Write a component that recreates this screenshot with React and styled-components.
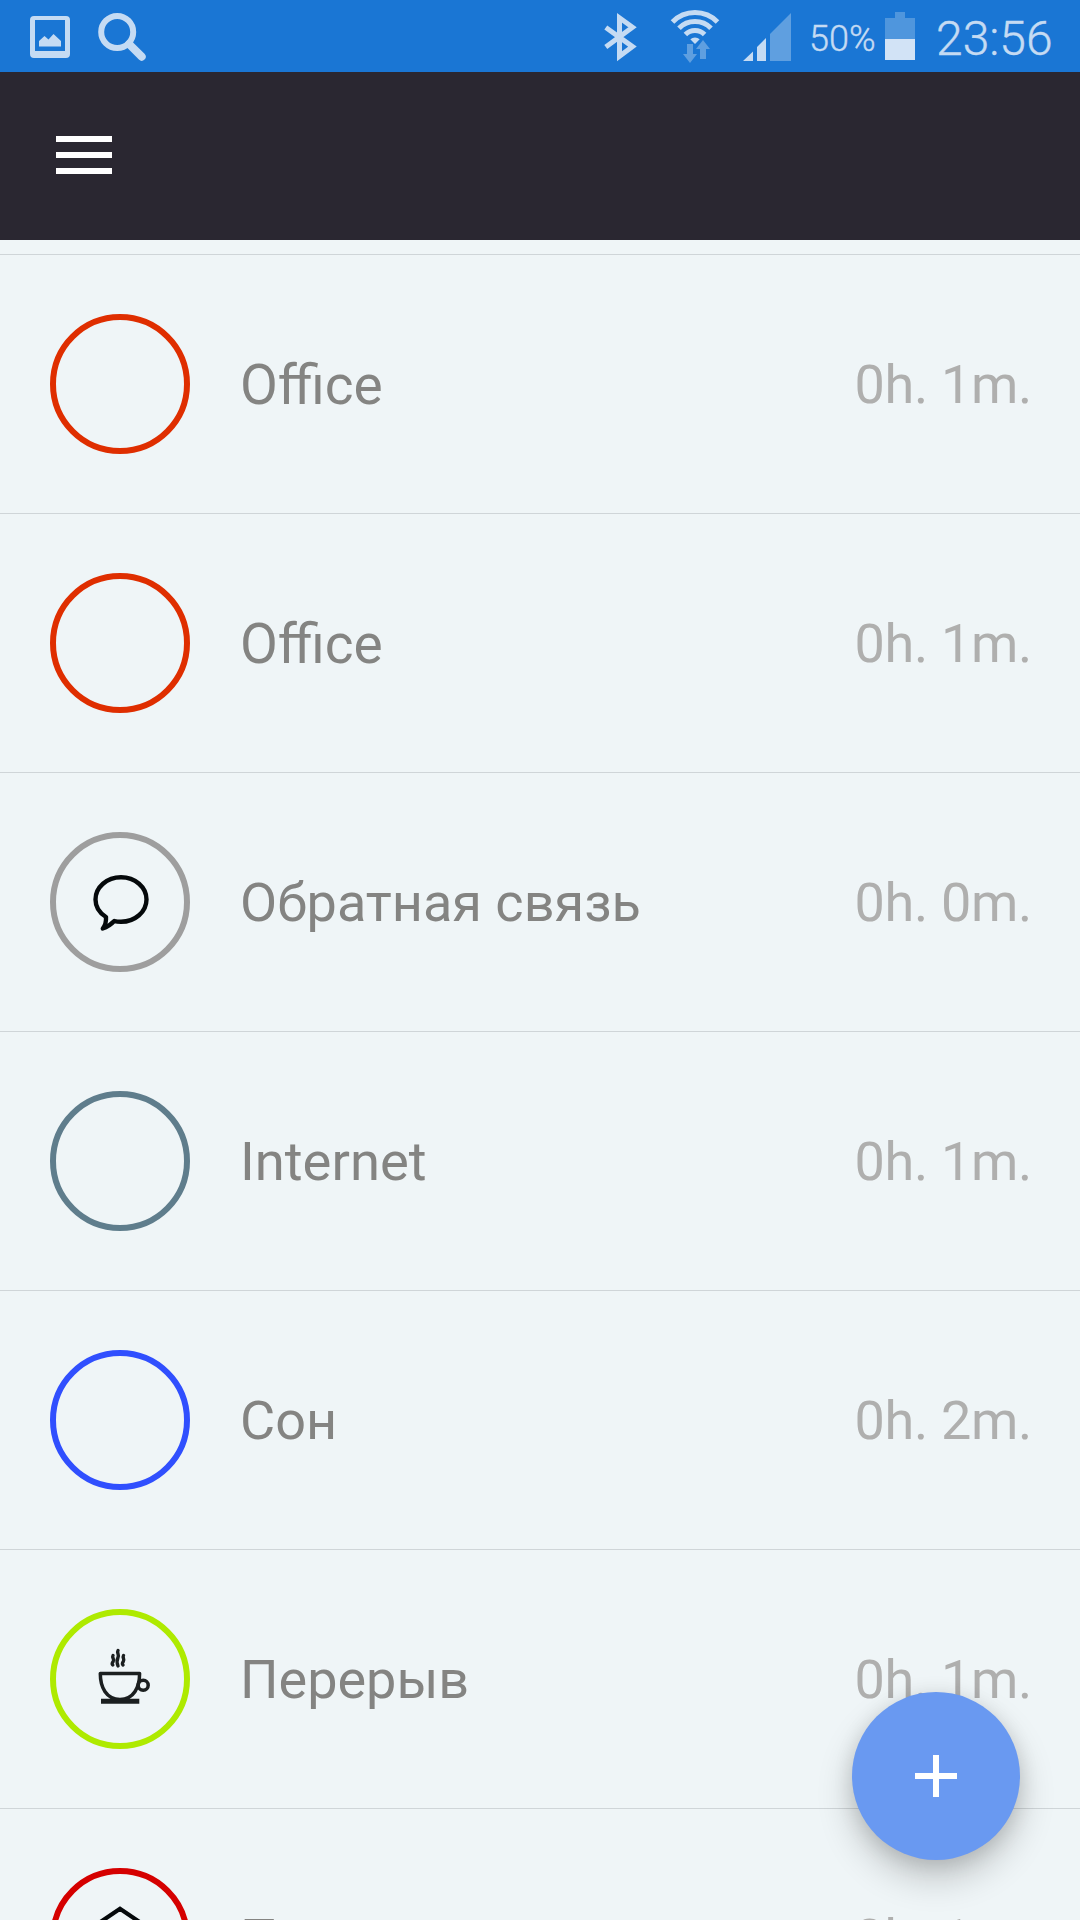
import React from "react";
import styled, { createGlobalStyle } from "styled-components";

const activities = [
  { name: "Office", time: "0h. 1m.", color: "#df2e00", size: 55 },
  { name: "Office", time: "0h. 1m.", color: "#df2e00", size: 55 },
  { name: "Обратная связь", time: "0h. 0m.", color: "#9e9e9e", icon: "bubble" },
  { name: "Internet", time: "0h. 1m.", color: "#5f7d8c", size: 54.4 },
  { name: "Сон", time: "0h. 2m.", color: "#304ffe" },
  { name: "Перерыв", time: "0h. 1m.", color: "#aeea00", icon: "cup" },
  { name: "Прочее", time: "0h. 1m.", color: "#d50000", icon: "home" },
];

const icons = {
  bubble: (
    <path
      d="M16 45C9.5 41 5.5 35 5.5 27.5C5.5 15.2 16.9 5.2 31 5.2S56.5 15.2 56.5 27.5S45 49.8 31 49.8C28.5 49.8 26.3 49.6 24.3 49C21 52.5 17.5 55 12.8 56.5C15.2 53.5 16.3 49.5 16 45Z"
      strokeWidth="4.4"
      stroke="#05090b"
    />
  ),
  cup: (
    <g stroke="#1b1f20" strokeWidth="3.5">
      <path d="M10.3 24.6H49.6C49.6 38 44 50.5 30 50.5S10.3 38 10.3 24.6Z" />
      <circle cx="53.2" cy="36.3" r="5" />
      <path d="M11 52.3H49.3" strokeWidth="5" strokeLinecap="butt" />
      <path
        d="M28 1.5C26.5 4 29.5 5.5 28 8.5S26.5 13 28 17M23 6.5C21.5 9 25 10 23.2 12.5S22 15 22.8 16M33.5 6.5C32 9 35 10 33.3 12.5S32.5 15 33 16"
        strokeWidth="3.4"
      />
    </g>
  ),
  home: (
    <path d="M6 17L30 .7L54 17V54H37V36H23V54H6Z" strokeWidth="4.2" stroke="#05090b" strokeLinejoin="miter" />
  ),
};

const StatusBar = () => (
  <StyledStatusBar>
    <svg className="gallery" width="40" height="42" viewBox="30 16 40 42">
      <path
        fillRule="evenodd"
        d="M34 16H66A4 4 0 0 1 70 20V54A4 4 0 0 1 66 58H34A4 4 0 0 1 30 54V20A4 4 0 0 1 34 16ZM35 20V51H65V20Z"
      />
      <path d="M39 46.5V41L44.5 36L48.5 39.5L53.5 34L61 41V46.5Z" />
    </svg>
    <svg className="search" width="50" height="50" viewBox="97 12 50 50" fill="none" stroke="currentColor">
      <circle cx="117.2" cy="32" r="16" strokeWidth="6" />
      <path d="M129 44L141.7 56.7" strokeWidth="8" strokeLinecap="round" />
    </svg>
    <svg className="bluetooth" width="36" height="50" viewBox="602 12 36 50" fill="none" stroke="currentColor">
      <path d="M605.8 27.5L632.5 46.6L619.5 56.2V17.8L632.5 27.2L605.8 47" strokeWidth="5" />
    </svg>
    <svg className="wifi" width="52" height="56" viewBox="669 8 52 56">
      <g fill="none" stroke="currentColor" strokeWidth="5">
        <path d="M672.5 22A31.5 31.5 0 0 1 717.5 22" />
        <path d="M679 28.2A22.5 22.5 0 0 1 711 28.2" />
        <path d="M685.4 34.5A13.6 13.6 0 0 1 704.6 34.5" />
      </g>
      <path d="M690.3 39.2A7 7 0 0 1 699.7 39.2L695 43.9Z" />
      <path
        className="dim"
        d="M687 44H693V54H697L690 63L683 54H687ZM700 59V49H696L703 40L710 49H706V59Z"
      />
    </svg>
    <svg className="signal" width="48" height="50" viewBox="743 12 48 50">
      <path d="M743 61L753 51.5V61ZM757 61V47L766 38V61Z" />
      <path className="dim" d="M770 61V34L791 13V61Z" />
    </svg>
    <span className="percent">50%</span>
    <Battery>
      <i />
      <b />
    </Battery>
    <span className="clock">23:56</span>
  </StyledStatusBar>
);

const Activity = ({ name, time, color, icon, size = 54 }) => (
  <Row>
    <Ring $color={color}>
      {icon && (
        <svg width="60" height="60" viewBox="0 0 60 60">
          {icons[icon]}
        </svg>
      )}
    </Ring>
    <Name $size={size}>{name}</Name>
    <Time>{time}</Time>
  </Row>
);

const App = () => (
  <Screen>
    <GlobalStyle />
    <StatusBar />
    <Toolbar>
      <MenuButton aria-label="Menu">
        <span />
        <span />
        <span />
      </MenuButton>
    </Toolbar>
    <List>
      {activities.map((activity, i) => (
        <Activity key={i} {...activity} />
      ))}
    </List>
    <AddButton aria-label="Add">
      <svg width="42" height="42" viewBox="0 0 42 42">
        <path d="M18 0H24V18H42V24H24V42H18V24H0V18H18Z" fill="#fff" />
      </svg>
    </AddButton>
  </Screen>
);

const GlobalStyle = createGlobalStyle`
  * {
    box-sizing: border-box;
  }

  body {
    margin: 0;
    font-family: Roboto, sans-serif;
  }
`;

const Screen = styled.div`
  background: #eff5f7;
  display: flex;
  flex-direction: column;
  height: 1920px;
  overflow: hidden;
  position: relative;
  width: 1080px;
`;

const StyledStatusBar = styled.header`
  align-items: flex-start;
  background: #1a76d4;
  color: #c5dbf3;
  display: flex;
  flex: none;
  font-weight: 300;
  height: 72px;
  padding-left: 30px;
  white-space: nowrap;

  svg {
    fill: currentColor;
    flex: none;
  }

  .gallery {
    margin-top: 16px;
  }

  .search {
    fill: none;
    margin: 12px 0 0 27px;
  }

  .bluetooth {
    fill: none;
    margin: 12px 0 0 auto;
  }

  .wifi {
    margin: 8px 0 0 31px;
  }

  .signal {
    margin: 12px 0 0 22px;
  }

  .dim {
    fill: #5f9fe0;
  }

  .percent,
  .clock {
    flex: none;
    -webkit-text-stroke: 0.4px currentColor;
  }

  .percent {
    font-size: 36px;
    line-height: 42px;
    margin: 18px 0 0 18px;
    width: 76px;
  }

  .clock {
    font-size: 48px;
    line-height: 56px;
    margin: 11px 0 0 21px;
    width: 144px;
  }
`;

const Battery = styled.div`
  align-items: center;
  display: flex;
  flex: none;
  flex-direction: column;
  margin-top: 12px;
  width: 30px;

  i {
    background: #4f96dd;
    height: 6px;
    width: 10px;
  }

  b {
    background: linear-gradient(#4f96dd 50%, #d2e3f6 50%);
    height: 42px;
    width: 30px;
  }
`;

const Toolbar = styled.nav`
  align-items: center;
  background: #2a2731;
  display: flex;
  flex: none;
  height: 168px;
  padding: 0 56px 2px;
`;

const MenuButton = styled.button`
  background: none;
  border: 0;
  display: flex;
  flex-direction: column;
  gap: 10px;
  padding: 0;
  width: 56px;

  span {
    background: #fff;
    height: 6px;
    width: 100%;
  }
`;

const List = styled.ul`
  list-style: none;
  margin: 14px 0 0;
  padding: 0;
`;

const Row = styled.li`
  align-items: center;
  border-top: 1px solid #cfd5d8;
  display: flex;
  height: 259px;
  padding: 0 48px 0 50px;
`;

const Ring = styled.div`
  align-items: center;
  border: 6px solid ${props => props.$color};
  border-radius: 50%;
  display: flex;
  flex: none;
  height: 140px;
  justify-content: center;
  width: 140px;

  svg {
    fill: none;
    overflow: visible;
    stroke-linecap: round;
    stroke-linejoin: round;
  }
`;

const Name = styled.span`
  color: #848482;
  flex: 1;
  font-size: ${props => props.$size}px;
  line-height: 64px;
  margin-left: 50px;
  padding-top: 2px;
`;

const Time = styled.span`
  color: #afafae;
  font-size: 54px;
  letter-spacing: -0.3px;
  line-height: 64px;
  padding-top: 2px;
`;

const AddButton = styled.button`
  align-items: center;
  background: #6999f1;
  border: 0;
  border-radius: 50%;
  bottom: 60px;
  box-shadow: 0 18px 36px rgba(0, 0, 0, 0.2), 0 4px 20px rgba(0, 0, 0, 0.12);
  display: flex;
  height: 168px;
  justify-content: center;
  padding: 0;
  position: absolute;
  right: 60px;
  width: 168px;
`;

export default App;
